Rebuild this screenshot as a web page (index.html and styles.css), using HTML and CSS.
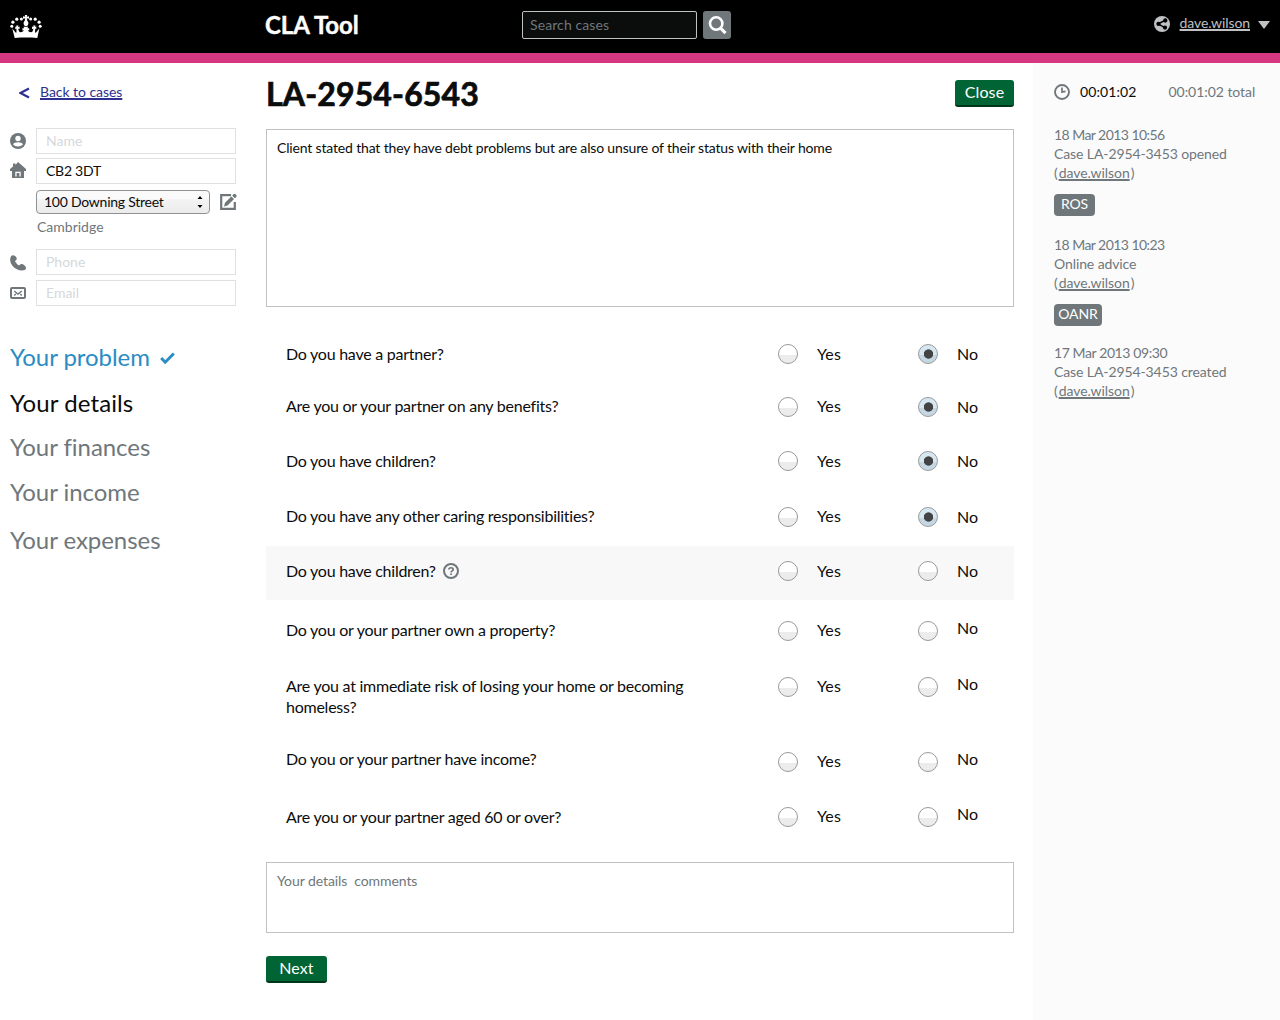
FILE: index.html
```html
<!DOCTYPE html>
<html lang="en">
<head>
<meta charset="utf-8">
<title>CLA Tool - LA-2954-6543</title>
<link rel="stylesheet" href="styles.css">
</head>
<body>
<header class="topbar">
  <svg class="crown" width="32" height="26" viewBox="0 0 32 26" fill="#fff">
    <circle cx="1.8" cy="12.2" r="1.5"/><circle cx="2.9" cy="8.2" r="1.6"/><circle cx="6.8" cy="5.2" r="1.6"/><circle cx="11.4" cy="4.9" r="1.5"/>
    <circle cx="30.2" cy="12.2" r="1.5"/><circle cx="29.1" cy="8.2" r="1.6"/><circle cx="25.2" cy="5.2" r="1.6"/><circle cx="20.6" cy="4.9" r="1.5"/>
    <path d="M14.8 1h2.4l-.4 1.8 2.2-.5v2.4l-2.2-.4.5 2.500c1.500 1.300 1.600 3.600-.2 5.200h-2.200c-1.800-1.600-1.700-3.900-.2-5.200l.5-2.500-2.200.4V2.300l2.200.5z"/>
    <path d="M4.700 24 2.200 14.300c1.500 2 2.400 3.400 4 4.600.6-1.500.2-2.600.2-4.300l-1.200.6.2-2.600 1 .3-.2-1.300h2.200l-.4 1.400 1.500-.5.1 2.600-1.500-.4c.8 2.400 1 3.600 2.600 3.600 1.700 0 2.800-.9 3-2.200l-1.400.4.200-2.500 1.500.5-.4-1.800h4.400l-.4 1.800 1.500-.5.2 2.500-1.400-.4c.2 1.300 1.300 2.200 3 2.200 1.600 0 1.800-1.200 2.600-3.600l-1.500.4.1-2.600 1.500.5-.4-1.400h2.200l-.2 1.300 1-.3.2 2.600-1.200-.6c0 1.700-.4 2.800.2 4.300 1.600-1.200 2.500-2.600 4-4.600L27.300 24c-7-.6-15.600-.6-22.600 0z"/>
  </svg>
  <div class="brand">CLA Tool</div>
  <div class="search">
    <div class="search-input">Search cases</div>
    <div class="search-button">
      <svg width="28" height="28" viewBox="0 0 28 28" fill="none" stroke="#fff"><circle cx="13.200" cy="12.500" r="6.200" stroke-width="2.600"/><path d="m17.500 17 5 5.200" stroke-width="3.200"/></svg>
    </div>
  </div>
  <div class="user">
    <svg width="16" height="16" viewBox="0 0 16 16"><circle cx="8" cy="8" r="8" fill="#bfc1c3"/><g stroke="#000" stroke-width="1.500" fill="#000"><path d="m11.500 4.300-7.500 3.500 7.200 4" fill="none"/><circle cx="11.300" cy="4.500" r="1.400"/><circle cx="4.500" cy="7.900" r="1.400"/><circle cx="11" cy="11.600" r="1.400"/></g></svg>
    <a class="user-name">dave.wilson</a>
    <svg width="12" height="8" viewBox="0 0 12 8"><path d="M0 0h12L6 8z" fill="#bfc1c3"/></svg>
  </div>
</header>
<div class="page">
  <aside class="client">
    <div class="back">
      <svg width="11" height="12" viewBox="0 0 11 12" fill="none" stroke="#2e3191" stroke-width="2.200"><path d="M10 1.500 1.500 6l8.500 4.500"/></svg>
      <a class="back-link">Back to cases</a>
    </div>
    <div class="field">
      <svg width="16" height="16" viewBox="0 0 16 16"><circle cx="8" cy="8" r="8" fill="#6f777b"/><circle cx="8" cy="5.500" r="2.700" fill="#fff"/><path d="M3 11.300c1-2.700 9-2.700 10 0-2.200 3-7.800 3-10 0z" fill="#fff"/></svg>
      <div class="input placeholder">Name</div>
    </div>
    <div class="field postcode">
      <svg width="16" height="16" viewBox="0 0 16 16" fill="#6f777b"><path d="M3 1.500h2.500V3L8 0l8 7v2H0V7l3-2.500z"/><path d="M2 8h12v8H2z"/><path d="M5.300 14.500V9.700h5.400v4.800H9.400V11H6.600v3.500z" fill="#fff"/></svg>
      <div class="input">CB2 3DT</div>
    </div>
    <div class="field address">
      <div class="select"><span>100 Downing Street</span>
        <svg width="6" height="14" viewBox="0 0 6 14"><path d="M3 1 5.500 4h-5zM3 13 .5 10h5z"/></svg>
      </div>
      <svg width="17" height="16" viewBox="0 0 17 16"><path d="M11 1.200H1.200v13.600h13.600V8" fill="none" stroke="#6f777b" stroke-width="2.200"/><path d="M4 12.500 5 8.800 11.300 2.500 14 5.100 7.500 11.500zM12.200 1.700 13.800 0h1.400l1.300 1.300v1.400l-1.700 1.600z" fill="#6f777b"/></svg>
    </div>
    <div class="town">Cambridge</div>
    <div class="field phone">
      <svg width="16" height="16" viewBox="0 0 16 16" fill="#6f777b"><path d="M1 1.200C2.500-.5 5 .2 6.300 2.300c1 1.700.1 2.700-1.300 3.700.7 1.900 2.200 3.500 4.200 4.500 1-1.500 3-2 4.800-.6 2 1.500 2.500 3 1.500 4.600C8 18.500-3 9 1 1.200z"/></svg>
      <div class="input placeholder">Phone</div>
    </div>
    <div class="field email">
      <svg width="16" height="12" viewBox="0 0 16 12" fill="none" stroke="#6f777b"><rect x="1" y="1" width="14" height="10" rx="1" stroke-width="2"/><path d="m4.200 4 3.800 3 3.800-3M4.200 8.500l1.600-1.600M11.800 8.500l-1.600-1.600" stroke-width="1.400"/></svg>
      <div class="input placeholder">Email</div>
    </div>
    <nav class="steps">
      <a class="step done">Your problem <svg width="15" height="12" viewBox="0 0 15 12" fill="none" stroke="#2b8cc4" stroke-width="2.900"><path d="m1.200 6 4 4.200L13.800 1.500"/></svg></a>
      <a class="step current">Your details</a>
      <a class="step finances">Your finances</a>
      <a class="step income">Your income</a>
      <a class="step expenses">Your expenses</a>
    </nav>
  </aside>
  <main class="case">
    <div class="case-head"><h1>LA-2954-6543</h1><a class="button close">Close</a></div>
    <div class="notes">Client stated that they have debt problems but are also unsure of their status with their home</div>
    <div class="questions">
      <div class="question"><p>Do you have a partner?</p><i class="radio"></i><span>Yes</span><i class="radio checked"></i><span>No</span></div>
      <div class="question h54"><p class="up1">Are you or your partner on any benefits?</p><i class="radio"></i><span class="up1">Yes</span><i class="radio checked"></i><span>No</span></div>
      <div class="question h56"><p>Do you have children?</p><i class="radio"></i><span>Yes</span><i class="radio checked"></i><span>No</span></div>
      <div class="question h54"><p class="up1">Do you have any other caring responsibilities?</p><i class="radio"></i><span class="up1">Yes</span><i class="radio checked"></i><span>No</span></div>
      <div class="question h54 active"><p>Do you have children? <svg width="16" height="16" viewBox="0 0 16 16" fill="none" stroke="#6f777b"><circle cx="8" cy="8" r="7" stroke-width="2"/><path d="M5.800 6.500c.1-2.400 4.500-2.300 4.400.1C10.100 8 8.100 7.900 8.100 9.600" stroke-width="1.700"/><path d="M8.100 10.500v1.600" stroke-width="1.800"/></svg></p><i class="radio"></i><span>Yes</span><i class="radio"></i><span>No</span></div>
      <div class="question h56 after-active"><p class="up1">Do you or your partner own a property?</p><i class="radio"></i><span class="up1">Yes</span><i class="radio"></i><span class="up3">No</span></div>
      <div class="question h75"><p class="up1">Are you at immediate risk of losing your home or becoming homeless?</p><i class="radio"></i><span class="up1">Yes</span><i class="radio"></i><span class="up3">No</span></div>
      <div class="question h55"><p class="up3">Do you or your partner have income?</p><i class="radio"></i><span class="up1">Yes</span><i class="radio"></i><span class="up3">No</span></div>
      <div class="question last"><p>Are you or your partner aged 60 or over?</p><i class="radio"></i><span class="up1">Yes</span><i class="radio"></i><span class="up3">No</span></div>
    </div>
    <div class="comments">Your details&nbsp; comments</div>
    <a class="button next">Next</a>
  </main>
  <aside class="history">
    <div class="timer">
      <svg width="16" height="16" viewBox="0 0 16 16" fill="none" stroke="#6f777b"><circle cx="8" cy="8" r="7" stroke-width="1.900"/><path d="M8 3.500V9M7.500 8.200l4-.8" stroke-width="1.700"/></svg>
      <span class="elapsed">00:01:02</span><span class="total">00:01:02 total</span>
    </div>
    <div class="event"><time>18 Mar 2013 10:56</time>Case LA-2954-3453 opened<br>(<a>dave.wilson</a>)</div>
    <div class="tag ros">ROS</div>
    <div class="event second"><time>18 Mar 2013 10:23</time>Online advice<br>(<a>dave.wilson</a>)</div>
    <div class="tag oanr">OANR</div>
    <div class="event third"><time>17 Mar 2013 09:30</time>Case LA-2954-3453 created<br>(<a>dave.wilson</a>)</div>
  </aside>
</div>
</body>
</html>
```
FILE: styles.css
```css
* { box-sizing: border-box; }
body { margin: 0; background: #fff; color: #0b0c0c; font: 14px/20px Lato, "Noto Sans", sans-serif; letter-spacing: -0.1px; }
svg { display: block; flex: none; }
h1, p { margin: 0; }
a { color: inherit; }

.topbar { display: grid; grid-template-columns: 255px 257px 1fr auto; height: 63px; padding: 0 10px; background: #000; border-bottom: 10px solid #d53880; }
.crown { margin-top: 14px; }
.brand { padding-top: 10px; color: #fff; font-size: 24px; font-weight: 700; line-height: 30px; -webkit-text-stroke: 0.4px #fff; }
.search { display: flex; gap: 6px; padding-top: 11px; }
.search-input { width: 175px; height: 28px; padding-left: 7px; border: 1px solid #bfc1c3; border-radius: 2px; background: #0b0c0c; color: #6f777b; line-height: 26px; letter-spacing: 0.1px; }
.search-button { width: 28px; height: 28px; border-radius: 3px; background: #6f777b; }
.user { display: flex; gap: 10px; height: 20px; margin-top: 14px; align-items: center; color: #bfc1c3; }
.user svg:last-child { margin-left: -2px; margin-top: 2px; }
.user-name, .event a, .back-link { text-decoration: underline; text-decoration-thickness: 1.5px; text-underline-offset: 1px; text-decoration-skip-ink: none; }
.user-name { letter-spacing: -0.1px; line-height: 18px; margin-top: -2px; }

.page { display: grid; grid-template-columns: 236px 30px 748px 19px 247px; min-height: 957px; }
.client { grid-column: 1; padding: 19px 0 0 10px; }
.case { grid-column: 3; }
.history { grid-column: 5; }

.back { display: flex; gap: 10px; align-items: center; height: 20px; margin: 0 0 26px 9px; color: #2e3191; }
.back svg { margin-top: 1px; }
.back-link { letter-spacing: -0.05px; }
.field { display: flex; align-items: center; gap: 10px; }
.postcode { margin-top: 4px; }
.postcode svg { margin-top: -2px; }
.input { flex: 1; height: 26px; padding-left: 9px; border: 1px solid #dee0e2; line-height: 24px; letter-spacing: 0; }
.postcode .input { line-height: 23px; letter-spacing: -0.25px; }
.placeholder { color: #d6d8da; }
.address { margin: 6px -1px 0 26px; }
.select { display: flex; width: 174px; height: 24px; padding: 0 6px 0 7px; align-items: center; justify-content: space-between; flex: none; border: 1px solid #8f9294; border-radius: 4px; background: linear-gradient(#fafafa 8px, #f4f4f4 8px, #ebebeb); letter-spacing: -0.25px; line-height: 20px; }
.select span { margin-top: -1px; }
.town { margin: 3px 0 0 27px; color: #6f777b; letter-spacing: 0; }
.phone { margin-top: 12px; }
.phone svg { margin-top: 2px; }
.email { margin-top: 5px; }
.steps { margin-top: 36px; font-size: 24px; line-height: 30px; letter-spacing: -0.05px; color: #6f777b; }
.step { display: block; }
.done { display: flex; align-items: center; gap: 10px; color: #2b8cc4; }
.done svg { margin-top: 2px; }
.current { margin-top: 16px; color: #0b0c0c; letter-spacing: 0.1px; }
.finances { margin-top: 14px; }
.income { margin-top: 15px; }
.expenses { margin-top: 18px; }

.case-head { display: flex; justify-content: space-between; height: 66px; }
h1 { padding-top: 11px; font-size: 32px; line-height: 40px; letter-spacing: 0.15px; -webkit-text-stroke: 0.7px #0b0c0c; }
.button { display: block; height: 27px; border-radius: 3px; border-bottom: 2px solid #003618; background: #006435; color: #fff; font-size: 16px; line-height: 24px; text-align: center; letter-spacing: 0.1px; }
.close { width: 59px; margin-top: 17px; }
.next { width: 61px; margin-top: 23px; }
.notes, .comments { padding: 8px 10px; border: 1px solid #bfc1c3; }
.notes { height: 178px; letter-spacing: -0.165px; }
.comments { height: 71px; color: #6f777b; letter-spacing: -0.08px; }
.questions { padding-top: 22px; font-size: 16px; letter-spacing: -0.25px; }
.question { display: grid; grid-template-columns: 492px 39px 101px 39px 1fr; height: 53px; padding: 15px 0 0 20px; align-items: start; }
.question p { display: flex; gap: 7px; max-width: 420px; line-height: 21px; transform: translateY(-1px); }
.question p svg { margin-top: 3px; }
.question span { letter-spacing: 0.1px; line-height: 19px; }
.h54 { height: 54px; }
.h55 { height: 55px; }
.h56 { height: 56px; }
.h75 { height: 75px; }
.last { height: 70px; }
.active { background: #f8f8f8; }
.after-active { margin-top: 6px; }
.question .up1 { margin-top: -1px; }
.question .up3 { margin-top: -3px; }
.radio { width: 20px; height: 20px; border: 1px solid #999; border-radius: 50%; background: linear-gradient(#fff 10px, #ececec 10px); }
.checked { background: radial-gradient(circle at 9.500px 9px, #434343 4.300px, transparent 5px), linear-gradient(#d7e7f1 10px, #c5d7e3 10px); }

.history { padding: 19px 0 0 21px; background: #fbfbfb; color: #6f777b; line-height: 19px; }
.timer { display: flex; align-items: center; height: 20px; letter-spacing: -0.05px; }
.timer span { margin-top: -1px; }
.timer .elapsed { margin: -1px 32px 0 10px; color: #0b0c0c; letter-spacing: 0.1px; }
.event { margin-top: 23px; }
.event time { display: block; letter-spacing: -0.55px; }
.third time { letter-spacing: -0.4px; }
.event a { margin: 0 1px; letter-spacing: -0.05px; }
.tag { height: 22px; margin-top: 12px; border-radius: 4px; background: #6f777b; color: #fff; line-height: 20px; text-align: center; }
.ros { width: 41px; }
.oanr { width: 48px; }
.second { margin-top: 19px; }
.third { margin-top: 17px; }
```
